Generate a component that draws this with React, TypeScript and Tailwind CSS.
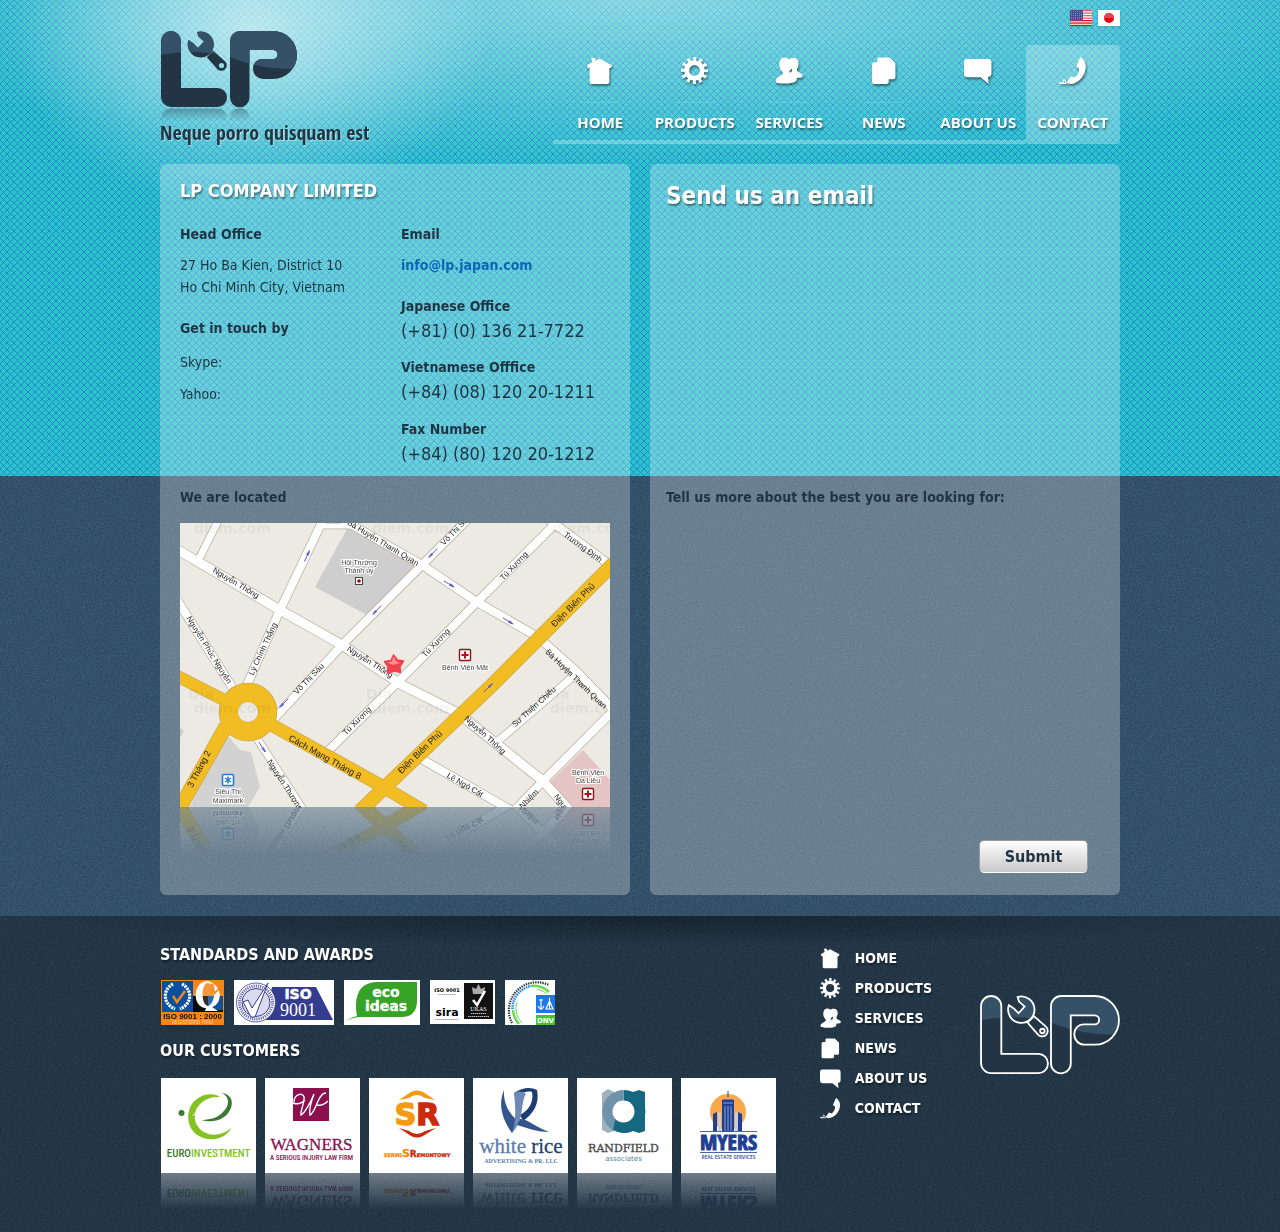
import type { ReactNode } from 'react';

type IconName = 'home' | 'gear' | 'people' | 'docs' | 'bubble' | 'phone';

const NAV: { label: string; icon: IconName }[] = [
  { label: 'HOME', icon: 'home' },
  { label: 'PRODUCTS', icon: 'gear' },
  { label: 'SERVICES', icon: 'people' },
  { label: 'NEWS', icon: 'docs' },
  { label: 'ABOUT US', icon: 'bubble' },
  { label: 'CONTACT', icon: 'phone' },
];

const ICONS: Record<IconName, ReactNode> = {
  home: (
    <path d="M5 1h4v2.5L13 1.5 25 8l-1 2.5h-1.500V24a2 2 0 0 1-2 2h-15a2 2 0 0 1-2-2V10.500H2L1 8l5-3z" />
  ),
  gear: (
    <g fill="none" stroke="currentColor">
      <circle cx="13" cy="13" r="7.500" strokeWidth="4.600" />
      <circle cx="13" cy="13" r="11" strokeWidth="4" strokeDasharray="2.880 2.880" strokeDashoffset="1.440" />
    </g>
  ),
  people: (
    <path fillRule="evenodd" d="M9 .5c2 0 3.400.8 4.500 1.800C14.600 1.300 16 1 17.500 1c3.600 0 5.500 2.500 5.300 6-.1 2-.9 3.400-1.600 4.600-.3 1.500.2 2.400 1.800 3.200l3.500 2c.5 1.200.2 2.600-1.200 2.900-1.600.4-2.800.3-4.300.4.300 2-.4 3.500-2.500 4.200-2.700.9-6 1.200-9.500 1.200-3 0-6-.2-8-1-.8-2.500.3-4.500 3-6 2-1 3.600-1.700 3.700-3.500-1.900-1.600-3.500-4-3.500-7.500C4.200 3.200 6 .5 9 .5zm7 10.500c-.4 1-1.300 1.900-2.300 2.500.1.800.4 1.400 1 1.800 1-.5 1.800-1.300 2-2.200-.1-.8-.3-1.500-.7-2.100z" />
  ),
  docs: (
    <path d="M8.500.5H19L24.500 6v13.500a2 2 0 0 1-2 2H18V24a2 2 0 0 1-2 2H4a2 2 0 0 1-2-2V7a2 2 0 0 1 2-2h3V2a1.500 1.500 0 0 1 1.500-1.500z" />
  ),
  bubble: (
    <path d="M3 2h20.500a3 3 0 0 1 3 3v11a3 3 0 0 1-3 3H23l.8 7L16 19.500H3a3 3 0 0 1-3-3V5a3 3 0 0 1 3-3z" />
  ),
  phone: (
    <>
      <path d="M20.500 0c4.500 2.500 6.300 7.500 4.800 13C23.500 20 17.500 25.800 11 26l-4-1.200L11.500 18.500l3.500 1.300c2.800-1.700 4.500-4.700 4.400-8.400L16.700 9z" />
      <path d="M0 25.500c2-2.500 2.500 1 3.800-.5s-.8-3 1-3 1 3 2.200 3.500H1" fill="none" stroke="currentColor" strokeWidth="1" />
    </>
  ),
};

function Icon({ name, className }: { name: IconName; className: string }) {
  return (
    <svg viewBox="0 0 27 27" fill="currentColor" aria-hidden="true" className={className}>
      {ICONS[name]}
    </svg>
  );
}

const L_SHAPE = 'M10 0A10 10 0 0 1 20 10V57H56.500A9.500 9.500 0 0 1 56.500 76H10A10 10 0 0 1 0 66V10A10 10 0 0 1 10 0Z';
const P_SHAPE =
  'M79 0H112A24 24 0 0 1 112 48H102A10 10 0 0 1 92 38V37A9 9 0 0 1 101 28H112A4.400 4.400 0 0 0 112 19H88.500V66.500A9.700 9.700 0 0 1 69 66.500V10A10 10 0 0 1 79 0Z';
const WRENCH_HEAD = 'M36 1L37.500 5.500L43 10.500L37 17L32 12L27.500 9A13 13 0 1 0 36 1Z';

function Logo({ id, outlined = false, className }: { id: string; outlined?: boolean; className: string }) {
  const shapes = (
    <>
      <path d={L_SHAPE} />
      <path d={P_SHAPE} />
      <path d={WRENCH_HEAD} />
      <path transform="translate(49 23) rotate(45)" d="M0-4.500L16-5.500A5.500 5.500 0 0 1 16 5.500L0 4.500Z" />
    </>
  );
  return (
    <svg viewBox="-2 -2 141 96" role="img" aria-label="LP" className={className}>
      <defs>
        <clipPath id={id + '-clip'}>{shapes}</clipPath>
        <linearGradient id={id + '-fade'} x1="0" y1="78" x2="0" y2="90" gradientUnits="userSpaceOnUse">
          <stop offset="0" stopColor="#233544" stopOpacity="0.35" />
          <stop offset="1" stopColor="#233544" stopOpacity="0" />
        </linearGradient>
      </defs>
      <g clipPath={'url(#' + id + '-clip)'}>
        <rect x="-2" y="-2" width="141" height="80" fill="#233544" />
        <path d="M-2-2V24Q35 17 69 26Q100 39 138 38V-2Z" fill="#345167" />
      </g>
      {outlined ? (
        <g fill="none" stroke="#fff" strokeWidth="1.800">
          {shapes}
          <circle cx="60.500" cy="34.500" r="2.200" />
        </g>
      ) : (
        <>
          <circle cx="60.500" cy="34.500" r="2.600" fill="#8fdbe2" />
          <path d="M0 90V86A10 9 0 0 1 10 77.500H56.500A9.500 9 0 0 1 66 86V90Z" fill={'url(#' + id + '-fade)'} />
          <path d="M69 90V86A9.700 9 0 0 1 88.500 86V90Z" fill={'url(#' + id + '-fade)'} />
        </>
      )}
    </svg>
  );
}

function FlagUS() {
  return (
    <svg viewBox="0 0 22 16" className="h-4 w-[22px] shadow" role="img" aria-label="English">
      <rect width="22" height="16" fill="#fff" />
      {[0, 2, 4, 6].map((i) => (
        <rect key={i} y={i * 1.25} width="22" height="1.300" fill="#f0606c" />
      ))}
      {[10, 12.4, 14.8].map((y) => (
        <rect key={y} y={y} width="22" height="1.300" fill="#d8121c" />
      ))}
      <rect width="13" height="10.500" fill="#4a4a92" />
      {[1.5, 3.5, 5.5, 7.5, 9].map((y) => (
        <path key={y} d={'M1 ' + y + 'H12.500'} stroke="#b9b9dc" strokeWidth="0.700" strokeDasharray="0.800 1.200" />
      ))}
    </svg>
  );
}

function FlagJP() {
  return (
    <svg viewBox="0 0 22 16" className="h-4 w-[22px] shadow" role="img" aria-label="日本語">
      <rect width="22" height="16" fill="#fff" />
      <circle cx="11" cy="8" r="5" fill="#dd0a14" />
      <path d="M6 8a5 5 0 0 1 10 0z" fill="#e8434b" />
    </svg>
  );
}

const WHITE_ROADS: [string, number][] = [
  ['M-2 27L100 87L162 122L222 162L278 190L363 258L390 288', 9],
  ['M18 38L39-4', 7],
  ['M143-3L100 87L66 164', 8],
  ['M142 3H172', 5],
  ['M160-5L242 42L297 79L358 114L396 148L434 187', 8],
  ['M292-8L242 42L162 122L92 198', 8],
  ['M378-2L297 79L222 155L145 231', 8],
  ['M368-4L434 45', 8],
  ['M-3 77L52 164', 8],
  ['M76 214L124 288', 7],
  ['M238 234L334 289', 8],
  ['M317 219L396 151', 7],
  ['M434 187L363 258L334 288', 8],
];

const YELLOW_ROADS: [string, number][] = [
  ['M434 40L310 164L180 288', 13],
  ['M-3 153L50 180', 11],
  ['M88 200L200 262L244 288', 12],
  ['M46 203L-2 288', 13],
];

const ROAD_NAMES: [string, number, number, number, number][] = [
  ['Nguyễn Thông', 56, 60, 31, 8],
  ['Nguyễn Thông', 190, 139, 32, 8],
  ['Nguyễn Phúc Nguyên', 29, 127, 58, 8],
  ['Lý Chính Thắng', 83, 126, -65, 8],
  ['Võ Thị Sáu', 129, 156, -46, 8],
  ['Bà Huyện Thanh Quan', 203, 20, 31, 8],
  ['Võ Thị Sáu', 276, 7, -46, 8],
  ['Tú Xương', 334, 43, -46, 8],
  ['Tú Xương', 256, 120, -46, 8],
  ['Tú Xương', 177, 198, -45, 8],
  ['Trương Định', 403, 24, 36, 8],
  ['Điện Biên Phủ', 393, 82, -45, 9],
  ['Điện Biên Phủ', 240, 229, -44, 9],
  ['Bà Huyện Thanh Quan', 396, 156, 44, 8],
  ['Sư Thiện Chiếu', 354, 184, -42, 8],
  ['Nguyễn Thông', 305, 212, 42, 8],
  ['Lê Ngô Cát', 285, 262, 30, 8],
  ['Cách Mạng Tháng 8', 145, 234, 29, 9],
  ['3 Tháng 2', 19, 246, -62, 9],
  ['Nguyễn Thượng', 105, 262, 57, 8],
  ['Nhiệm', 349, 276, -45, 8],
  ['Nguyễn', 384, 283, 52, 8],
];

const PLACE_NAMES: [string, number, number][] = [
  ['Hội Trường', 179, 42],
  ['Thành ủy', 179, 50],
  ['Bệnh Viện Mắt', 285, 147],
  ['Siêu Thị', 48, 271],
  ['Maximark', 48, 280],
  ['Bệnh Viện', 408, 252],
  ['Da Liễu', 408, 260],
];

const ARROWS: [number, number, number][] = [
  [127, 33, -65],
  [197, 87, 134],
  [253, 30, 134],
  [269, 61, 31],
  [328, 98, 31],
  [104, 180, 134],
  [82, 224, 57],
  [308, 165, -45],
];

function StreetMap() {
  return (
    <div>
      <svg viewBox="0 0 430 284" className="block w-full" role="img" aria-label="Office location map">
        <g id="street-map">
          <rect width="430" height="284" fill="#edeae3" />
          <path d="M168 4L135 64L187 92L238 45Z" fill="#cecece" />
          <path d="M47 212L60 227L71 229L80 264L68 284H10L20 262Z" fill="#d2d2d2" />
          <path d="M0 205L4 208L0 215Z" fill="#cecece" />
          <path d="M403 227L430 257V284H385L368 261Z" fill="#e5c5c3" />
          <g fill="none" stroke="#bdb3a2">
            {WHITE_ROADS.map(([d, w]) => (
              <path key={d} d={d} strokeWidth={w + 1.6} />
            ))}
          </g>
          <g fill="none" stroke="#fff">
            {WHITE_ROADS.map(([d, w]) => (
              <path key={d} d={d} strokeWidth={w} />
            ))}
          </g>
          <g fill="none" stroke="#c9a650">
            {YELLOW_ROADS.map(([d, w]) => (
              <path key={d} d={d} strokeWidth={w + 1.4} />
            ))}
            <circle cx="68" cy="189" r="19.500" strokeWidth="19.500" />
          </g>
          <g fill="none" stroke="#f2bd22">
            {YELLOW_ROADS.map(([d, w]) => (
              <path key={d} d={d} strokeWidth={w} />
            ))}
            <circle cx="68" cy="189" r="19.500" strokeWidth="18" />
          </g>
          <circle cx="68" cy="189" r="10" fill="#edeae3" />
          <g fill="#000" opacity="0.040" fontFamily="DejaVu Sans, sans-serif" fontWeight="bold" fontSize="14">
            {[14, 192, 372].map((x) => (
              <text key={'t' + x} x={x} y="10">diem.com</text>
            ))}
            {[8, 186, 364].map((x) => (
              <g key={'m' + x}>
                <text x={x} y="176">Dia</text>
                <text x={x + 6} y="190">diem.com</text>
              </g>
            ))}
          </g>
          {ARROWS.map(([x, y, a]) => (
            <path key={x} transform={'translate(' + x + ' ' + y + ') rotate(' + a + ')'} d="M-6 0H6M1-1L6 0L1 1" fill="none" stroke="#5a5ad0" strokeWidth="0.900" />
          ))}
          <g fontFamily="Liberation Sans, sans-serif" textAnchor="middle" fill="#222">
            {ROAD_NAMES.map(([t, x, y, a, s]) => (
              <text key={t + x} fontSize={s} dominantBaseline="central" transform={'translate(' + x + ' ' + y + ') rotate(' + a + ')'}>
                {t}
              </text>
            ))}
          </g>
          <g fontFamily="Liberation Sans, sans-serif" fontSize="7" textAnchor="middle" fill="#444" stroke="#fff" strokeWidth="2" paintOrder="stroke">
            {PLACE_NAMES.map(([t, x, y]) => (
              <text key={t + y} x={x} y={y}>{t}</text>
            ))}
          </g>
          <rect x="175.500" y="54.500" width="7" height="7" fill="#fff" stroke="#444" />
          <circle cx="179" cy="58" r="1.800" fill="#a00" />
          {[[285, 132], [408, 271]].map(([x, y]) => (
            <g key={x}>
              <rect x={x - 5.5} y={y - 5.5} width="11" height="11" rx="1" fill="#fff" stroke="#8c1220" strokeWidth="1.400" />
              <path d={'M' + (x - 3.5) + ' ' + y + 'h7M' + x + ' ' + (y - 3.5) + 'v7'} stroke="#b01020" strokeWidth="2" />
            </g>
          ))}
          <rect x="42.500" y="251.500" width="11" height="11" rx="1" fill="#fff" stroke="#2a7bd0" strokeWidth="1.600" />
          <path d="M48 253.500V260.500M45 255L51 259M51 255L45 259" stroke="#2a7bd0" strokeWidth="1.500" />
          <path d="M213.500 132L217.500 137L223.500 138L220 143.500L220.500 149.500L214.500 148L207.500 150L208 143.500L204.500 138.500L211 137.500Z" fill="#f4414c" stroke="#f4414c" strokeWidth="1.500" strokeLinejoin="round" />
          <path d="M213.500 133.500L216.500 138.500L220 140L213 142L207.500 139.500L212 138.500Z" fill="#ff8e90" />
        </g>
      </svg>
      <svg viewBox="0 0 430 48" aria-hidden="true" className="block w-full opacity-35 [mask-image:linear-gradient(to_bottom,black,transparent)]">
        <use href="#street-map" transform="translate(0 284) scale(1 -1)" />
      </svg>
    </div>
  );
}

const LABEL = 'Open Sans, sans-serif';
const NARROW = 'Open Sans Condensed, Roboto Condensed, sans-serif';
const SERIF = 'Liberation Serif, serif';

const CUSTOMERS: { id: string; name: string; art: ReactNode }[] = [
  {
    id: 'euro',
    name: 'Euroinvestment',
    art: (
      <>
        <circle cx="20.500" cy="35" r="3" fill="#3d7a33" />
        <path d="M59 19C52 14 38 16 31 26C24 37 27 52 38 58C50 65 66 60 70 50C61 58 48 59 40 52C35 47 33 42 34 37L31 38L34 35C36 26 46 18 59 19Z" fill="#84c225" />
        <path d="M61 15C69 19 69 28 61 35C56 40 48 42 40 42C55 46 66 40 70 30C73 21 68 16 61 15Z" fill="#3d7a33" />
        <text x="47.500" y="79" textAnchor="middle" fontFamily="Roboto Condensed, sans-serif" fontSize="11" fontWeight="500" fill="#84c225">
          <tspan fill="#3d7a33">EURO</tspan>INVESTMENT
        </text>
      </>
    ),
  },
  {
    id: 'wagners',
    name: 'Wagners, a serious injury law firm',
    art: (
      <>
        <rect x="28" y="10" width="36" height="33" fill="#8c0f50" />
        <path d="M29 24C29 16 38 14 39 19C40 24 35 33 36 37C39 36 46 24 49 16C46 24 44 33 45 37C51 34 53 15 61 15M52 27C56 28 60 26 63 23M28 25C33 27 37 25 40 22" fill="none" stroke="#fff" strokeWidth="1.400" />
        <text x="46.500" y="72" textAnchor="middle" fontFamily={SERIF} fontSize="17" fill="#8c0f50" stroke="#8c0f50" strokeWidth="0.300">WAGNERS</text>
        <text x="46.500" y="82" textAnchor="middle" fontFamily="Roboto Condensed, sans-serif" fontSize="7" fontWeight="500" fill="#8c0f50">A SERIOUS INJURY LAW FIRM</text>
      </>
    ),
  },
  {
    id: 'serwis',
    name: 'Serwis Remontowy',
    art: (
      <>
        <path d="M30 22L42 14Q48 11 54 14L66 22L56 20Q48 14 40 20Z" fill="#f59a0e" />
        <path d="M30 50L40 53Q48 59 56 53L67 50L54 58Q48 61 42 58Z" fill="#c92a0c" />
        <text x="48" y="47" textAnchor="middle" fontFamily="DejaVu Sans, sans-serif" fontSize="30" fontWeight="bold" fill="#c92a0c" stroke="#c92a0c" strokeWidth="1.500">
          <tspan fill="#f59a0e" stroke="#f59a0e">S</tspan>R
        </text>
        <text x="48" y="79" textAnchor="middle" fontFamily="DejaVu Sans, sans-serif" fontSize="5" fontWeight="bold" fill="#c92a0c" stroke="#c92a0c" strokeWidth="0.300">
          <tspan fill="#f08a10" stroke="#f08a10">SERWI<tspan fontSize="11">S</tspan></tspan><tspan fontSize="9">R</tspan>EMONTOWY
        </text>
      </>
    ),
  },
  {
    id: 'whiterice',
    name: 'White Rice Advertising & PR, LLC',
    art: (
      <>
        <path d="M31 12C26 24 27 38 39 55L46 44C36 36 30 25 31 12Z" fill="#34558c" />
        <path d="M41 15C50 9 58 9 64 12C67 26 60 36 50 43L47 37C56 32 61 24 59 14C54 12 48 17 41 15Z" fill="#1d3c74" />
        <path d="M41 15C45 13 49 13 53 16C47 25 52 42 39 55C44 41 42 26 41 15Z" fill="#6d89b5" />
        <path d="M47 41C55 41 62 49 76 54C62 54 52 49 44 47Z" fill="#34558c" />
        <text x="48" y="75" textAnchor="middle" fontFamily={SERIF} fontSize="21" fill="#5b7dab" stroke="#5b7dab" strokeWidth="0.300">
          white <tspan fill="#1f3f70" stroke="#1f3f70">rice</tspan>
        </text>
        <text x="48" y="85" textAnchor="middle" fontFamily={SERIF} fontSize="6" fontWeight="bold" fill="#5b7dab">ADVERTISING &amp; PR. LLC</text>
      </>
    ),
  },
  {
    id: 'randfield',
    name: 'Randfield associates',
    art: (
      <>
        <path d="M25 15L31 11L37 14V53L31 55L25 52Z" fill="#9db1bf" />
        <path d="M56 14L62 12L68 14V53L62 55L56 53Z" fill="#15687f" />
        <path d="M46.500 12A21.500 21.500 0 1 1 36 52V34H46.500Z" fill="#15687f" />
        <path d="M46.500 12A21.500 21.500 0 0 0 36 52L40 34L46.500 24Z" fill="#6f93aa" />
        <circle cx="46.500" cy="33.500" r="11" fill="#fff" />
        <text x="46.500" y="74" textAnchor="middle" fontFamily="DejaVu Serif, serif" fontSize="11" fill="#4c4c4c" stroke="#4c4c4c" strokeWidth="0.400">RANDFIELD</text>
        <text x="46.500" y="83" textAnchor="middle" fontFamily="DejaVu Sans, sans-serif" fontSize="7" fill="#4d8096">associates</text>
      </>
    ),
  },
  {
    id: 'myers',
    name: 'Myers real estate services',
    art: (
      <>
        <circle cx="47" cy="34" r="18" fill="#f9a84d" />
        <path d="M32 36L36 34V53H32ZM57 34L61 36V53H57Z" fill="#1e3f94" />
        <path d="M37 34L40 35V53H37ZM54 35L57 34V53H54Z" fill="#c4ccdf" />
        <path d="M47 13V19M41.500 22H52.500V53H41.500Z" fill="#1e3f94" stroke="#1e3f94" />
        <path d="M42 25H52M44 28V53M47 28V53M50 28V53" stroke="#dbe2f2" strokeWidth="0.600" />
        <path d="M19 53.500H76M19 74.500H76" stroke="#1e3f94" strokeWidth="0.800" />
        <text x="47.500" y="72" textAnchor="middle" fontFamily={NARROW} fontSize="22" fontWeight="800" fill="#1e3f94" stroke="#1e3f94" strokeWidth="1">MYERS</text>
        <text x="47.500" y="81" textAnchor="middle" fontFamily={LABEL} fontSize="5" fontWeight="600" fill="#1e3f94">REAL ESTATE SERVICES</text>
      </>
    ),
  },
];

function AwardRegistered() {
  return (
    <svg viewBox="0 0 63 45" className="h-[45px] w-[63px] shadow-md" role="img" aria-label="ISO 9001:2000 registered firm">
      <rect width="63" height="45" fill="#f58518" />
      <rect x="1" y="1" width="31" height="31" fill="#0c4f9e" />
      <rect x="32" y="16" width="30" height="16" fill="#0a0a0a" />
      <rect x="47" y="16" width="15" height="14" fill="#0c4f9e" />
      <path d="M12 4C1 10 2 24 14 29M21 4C32 10 31 24 19 29" fill="none" stroke="#fff" strokeWidth="3.200" strokeDasharray="2.200 0.900" />
      <path d="M12 16L16 22L24 11" fill="none" stroke="#f58518" strokeWidth="2.500" />
      <path fillRule="evenodd" d="M47 1C31 1 31 28 45 28L44 31H57L51 27C62 24 62 5 47 1ZM46 3C40 6 40 24 47 26C54 24 55 6 52 4Z" fill="#fff" />
      <path d="M46 3C40 6 40 24 47 26C50 25 52 21 53 16V4Z" fill="#fff" opacity="0.150" />
      <path d="M51 9L54 13L60 6" fill="none" stroke="#f58518" strokeWidth="1.500" />
      <text x="31.500" y="39" textAnchor="middle" fontFamily="Liberation Sans, sans-serif" fontWeight="bold" fontSize="8" fill="#111">ISO 9001 : 2000</text>
      <text x="31.500" y="44" textAnchor="middle" fontFamily={LABEL} fontSize="5" fill="#fbd3a4">REGISTERED FIRM</text>
    </svg>
  );
}

function AwardIso() {
  return (
    <svg viewBox="0 0 100 45" className="h-[45px] w-[100px]" role="img" aria-label="ISO 9001">
      <rect width="100" height="45" fill="#fff" />
      <path d="M38 7H82L99 40H30Z" fill="#343c90" />
      <circle cx="22" cy="22.500" r="19.500" fill="#fff" stroke="#343c90" strokeWidth="0.800" />
      <circle cx="22" cy="22.500" r="16.500" fill="none" stroke="#6468b0" strokeWidth="3" strokeDasharray="1.200 1" />
      <circle cx="22" cy="22.500" r="14" fill="#d9daee" stroke="#343c90" />
      <path d="M9 22L14 20L18 28L34 3L21 37H17Z" fill="#fff" stroke="#343c90" />
      <text x="64" y="19" textAnchor="middle" fontFamily="DejaVu Sans, sans-serif" fontWeight="bold" fontSize="14" fill="#fff" stroke="#fff" strokeWidth="0.500">ISO</text>
      <text x="64" y="36" textAnchor="middle" fontFamily={SERIF} fontSize="18" fill="#fff">9001</text>
    </svg>
  );
}

function AwardEco() {
  return (
    <svg viewBox="0 0 76 45" className="h-[45px] w-[76px]" role="img" aria-label="eco ideas">
      <rect width="76" height="45" fill="#fff" />
      <path d="M2 41Q8 37 13 36Q12 32 12 24Q13 2 34 2H73V22Q72 37 58 37H14Q8 38 2 41Z" fill="#36a327" />
      <g fontFamily="DejaVu Sans, sans-serif" fontWeight="bold" fontSize="14" textAnchor="middle" fill="#fff" stroke="#fff" strokeWidth="0.300">
        <text x="42" y="17">eco</text>
        <text x="42" y="31">ideas</text>
      </g>
    </svg>
  );
}

function AwardSira() {
  return (
    <svg viewBox="0 0 65 44" className="h-[44px] w-[65px] shadow-md" role="img" aria-label="ISO 9001 sira, UKAS quality management">
      <rect width="65" height="44" fill="#fff" />
      <rect x="34" y="3" width="29" height="36" fill="#121212" />
      <path d="M43 14L42 7L46 9L48.500 4L51 9L55 7L54 14Z" fill="#aaa" />
      <path d="M43 20L47 25L55 11" fill="none" stroke="#fff" strokeWidth="2.500" />
      <g fontFamily="DejaVu Sans, sans-serif" fontWeight="bold" textAnchor="middle">
        <text x="17" y="12" fontSize="5">ISO 9001</text>
        <text x="17" y="36" fontSize="11">sira</text>
      </g>
      <path d="M8 14.500H26M5 39.500H29" stroke="#888" strokeWidth="0.800" strokeDasharray="1.500 0.500" />
      <text x="48.500" y="31" textAnchor="middle" fontFamily={SERIF} fontSize="6" fill="#fff">UKAS</text>
      <path d="M41 33.500H56M38 36.500H59" stroke="#bbb" strokeWidth="1" strokeDasharray="1.500 0.500" />
    </svg>
  );
}

function AwardDnv() {
  return (
    <svg viewBox="0 0 50 45" className="h-[45px] w-[50px]" role="img" aria-label="DNV quality management system">
      <rect width="50" height="45" fill="#fff" />
      <g fill="none">
        <path d="M7 43A28 28 0 0 1 44 5" stroke="#333" strokeWidth="2.200" strokeDasharray="1.400 1" />
        <path d="M7.500 29A23 23 0 0 1 26 6" stroke="#2f8ae0" strokeWidth="2.500" strokeDasharray="1.600 0.800" />
        <path d="M26 6A23 23 0 0 1 44 12M8 30A23 23 0 0 0 14 44" stroke="#67d94c" strokeWidth="2.500" />
        <path d="M17 43A20 20 0 0 1 12 22M32 9A20 20 0 0 1 42 14" stroke="#67d94c" />
      </g>
      <rect x="31" y="15" width="19" height="18" fill="#1c76ec" />
      <path d="M36 19V30M33 26Q36 32 39 26M34 20H38M44.500 18V29M41 29H48L44.500 21Z" fill="none" stroke="#fff" strokeWidth="1.200" />
      <rect x="31" y="35" width="19" height="10" fill="#3fc631" />
      <text x="40.500" y="43" textAnchor="middle" fontFamily="DejaVu Sans, sans-serif" fontWeight="bold" fontSize="7" fill="#fff">DNV</text>
    </svg>
  );
}

function Grain({ id, className }: { id: string; className: string }) {
  return (
    <svg aria-hidden="true" className={className}>
      <filter id={id} colorInterpolationFilters="sRGB">
        <feTurbulence type="fractalNoise" baseFrequency="0.600" numOctaves="2" />
        <feColorMatrix values="1 0 0 0 0  1 0 0 0 0  1 0 0 0 0  0 0 0 0 1" />
      </filter>
      <rect width="100%" height="100%" filter={'url(#' + id + ')'} />
    </svg>
  );
}

function Phone({ title, number, className }: { title: string; number: string; className: string }) {
  return (
    <div className={className}>
      <h3 className="text-sm leading-5 font-bold">{title}</h3>
      <p className="mt-px text-lg leading-7">{number}</p>
    </div>
  );
}

const HEADING_SHADOW = '[text-shadow:1px_2px_2px_rgba(0,0,0,0.45)]';

export default function App() {
  return (
    <div className="bg-[#233646] font-['DejaVu_Sans_Condensed','Noto_Sans',sans-serif] text-[#1f3342]">
      <div className="relative isolate bg-[#335168]">
        <Grain id="grain-body" className="absolute inset-0 -z-10 h-full w-full opacity-25 mix-blend-overlay" />
        <div className="absolute inset-x-0 top-0 -z-10 h-[476px] bg-[#2bc3ca] bg-[linear-gradient(45deg,transparent_44%,#2288d0_44%,#2288d0_56%,transparent_56%),linear-gradient(-45deg,transparent_44%,#2288d0_44%,#2288d0_56%,transparent_56%)] bg-[length:7px_7px]" />
        <div className="absolute inset-x-0 top-0 -z-10 h-[476px] bg-[radial-gradient(240px_180px_at_250px_30px,rgba(255,255,255,0.6),transparent),radial-gradient(800px_170px_at_50%_0,rgba(255,255,255,0.45),transparent)]" />

        <header className="mx-auto flex max-w-[960px] items-start justify-between">
          <div className="pt-[29px]">
            <a href="#home" className="block">
              <Logo id="logo-top" className="-ml-px h-24 w-[141px]" />
            </a>
            <p className="-mt-[6px] font-['Open_Sans_Condensed','Roboto_Condensed',sans-serif] text-xl leading-7 font-normal text-[#233544] [text-shadow:1px_1px_1px_rgba(255,255,255,0.5)]">
              Neque porro quisquam est
            </p>
          </div>
          <div className="pt-[10px] pb-5">
            <div className="flex justify-end gap-[6px]">
              <a href="#en"><FlagUS /></a>
              <a href="#ja"><FlagJP /></a>
            </div>
            <nav aria-label="Main" className="mt-[19px]">
              <ul className="grid w-[567px] grid-cols-6">
                {NAV.map(({ label, icon }) => {
                  const active = label === 'CONTACT';
                  return (
                    <li key={label} className={active ? 'rounded bg-white/27 pb-3' : 'border-b-4 border-white/27 pb-2'}>
                      <a
                        href={'#' + icon}
                        aria-current={active ? 'page' : undefined}
                        className={"flex flex-col items-center pt-3 font-['Open_Sans',sans-serif] text-[15px] leading-5 font-bold whitespace-nowrap text-white " + HEADING_SHADOW}
                      >
                        <Icon name={icon} className="h-7 w-7 drop-shadow-[1px_2px_1px_rgba(0,0,0,0.45)]" />
                        <span className="mt-[17px] h-px w-10 bg-white/15" />
                        <span className="mt-[9px]">{label}</span>
                      </a>
                    </li>
                  );
                })}
              </ul>
            </nav>
          </div>
        </header>

        <main className="mx-auto grid max-w-[960px] grid-cols-2 gap-5 pb-[21px]">
          <section className="rounded-md bg-white/27 px-5 pt-[13px] pb-10">
            <h1 className={'text-lg leading-7 font-bold text-white ' + HEADING_SHADOW}>LP COMPANY LIMITED</h1>
            <div className="mt-[19px] grid grid-cols-[221px_1fr]">
              <div className="text-sm leading-5">
                <h3 className="font-bold">Head Office</h3>
                <p className="mt-[10px] leading-[22px]">
                  27 Ho Ba Kien, District 10
                  <br />
                  Ho Chi Minh City, Vietnam
                </p>
                <h3 className="mt-5 font-bold">Get in touch by</h3>
                <p className="mt-[14px]">Skype:</p>
                <p className="mt-3">Yahoo:</p>
              </div>
              <div>
                <h3 className="text-sm leading-5 font-bold">Email</h3>
                <p className="mt-[11px] text-sm leading-5 font-bold text-[#0a67b8]">
                  <a href="mailto:info@lp.japan.com">info@lp.japan.com</a>
                </p>
                <Phone className="mt-[21px]" title="Japanese Office" number="(+81) (0) 136 21-7722" />
                <Phone className="mt-3" title="Vietnamese Offfice" number="(+84) (08) 120 20-1211" />
                <Phone className="mt-[13px]" title="Fax Number" number="(+84) (80) 120 20-1212" />
              </div>
            </div>
            <h3 className="mt-[19px] mb-4 text-sm leading-5 font-bold">We are located</h3>
            <StreetMap />
          </section>

          <section className="rounded-md bg-white/27">
            <form className="flex h-full flex-col px-4 pt-4 pb-[22px]">
              <h2 className={'text-2xl leading-8 font-bold text-white ' + HEADING_SHADOW}>Send us an email</h2>
              <label htmlFor="message" className="mt-[275px] text-sm leading-5 font-bold">
                Tell us more about the best you are looking for:
              </label>
              <textarea id="message" className="my-3 grow resize-none bg-transparent text-sm outline-none" />
              <button
                type="submit"
                className="mr-4 h-[33px] w-[109px] self-end rounded-[5px] border border-[#9a9a9a] border-b-white bg-linear-to-b from-white to-[#c9c9c9] text-base font-bold"
              >
                Submit
              </button>
            </form>
          </section>
        </main>
      </div>

      <footer className="relative isolate bg-[#233646]">
        <Grain id="grain-footer" className="absolute inset-0 -z-10 h-full w-full opacity-25 mix-blend-overlay" />
        <div className="absolute inset-x-0 top-0 -z-10 h-8 bg-[radial-gradient(50%_100%_at_50%_0,rgba(0,0,0,0.35),transparent)]" />
        <div className="mx-auto flex max-w-[960px] justify-between pt-[27px] pb-[22px]">
          <div>
            <h2 className={'text-base leading-6 font-bold text-white ' + HEADING_SHADOW}>STANDARDS AND AWARDS</h2>
            <div className="mt-[13px] flex gap-[10px] pl-px">
              <AwardRegistered />
              <AwardIso />
              <AwardEco />
              <AwardSira />
              <AwardDnv />
            </div>
            <h2 className={'mt-[14px] text-base leading-6 font-bold text-white ' + HEADING_SHADOW}>OUR CUSTOMERS</h2>
            <ul className="mt-[15px] flex gap-[9px] pl-px">
              {CUSTOMERS.map(({ id, name, art }) => (
                <li key={id} className="w-[95px]">
                  <svg viewBox="0 0 95 95" className="block w-full" role="img" aria-label={name}>
                    <g id={'customer-' + id}>
                      <rect width="95" height="95" fill="#fff" />
                      {art}
                    </g>
                  </svg>
                  <svg viewBox="0 0 95 37" aria-hidden="true" className="block w-full opacity-35 [mask-image:linear-gradient(to_bottom,black,transparent)]">
                    <use href={'#customer-' + id} transform="translate(0 95) scale(1 -1)" />
                  </svg>
                </li>
              ))}
            </ul>
          </div>
          <div className="flex items-start">
            <nav aria-label="Footer">
              <ul>
                {NAV.map(({ label, icon }) => (
                  <li key={label}>
                    <a href={'#' + icon} className={'flex h-[30px] items-center gap-[14px] text-sm font-bold text-white ' + HEADING_SHADOW}>
                      <Icon name={icon} className="h-[21px] w-[21px]" />
                      {label}
                    </a>
                  </li>
                ))}
              </ul>
            </nav>
            <Logo id="logo-footer" outlined className="mt-[51px] -mr-[2px] ml-[47px] w-[143px]" />
          </div>
        </div>
      </footer>
    </div>
  );
}
